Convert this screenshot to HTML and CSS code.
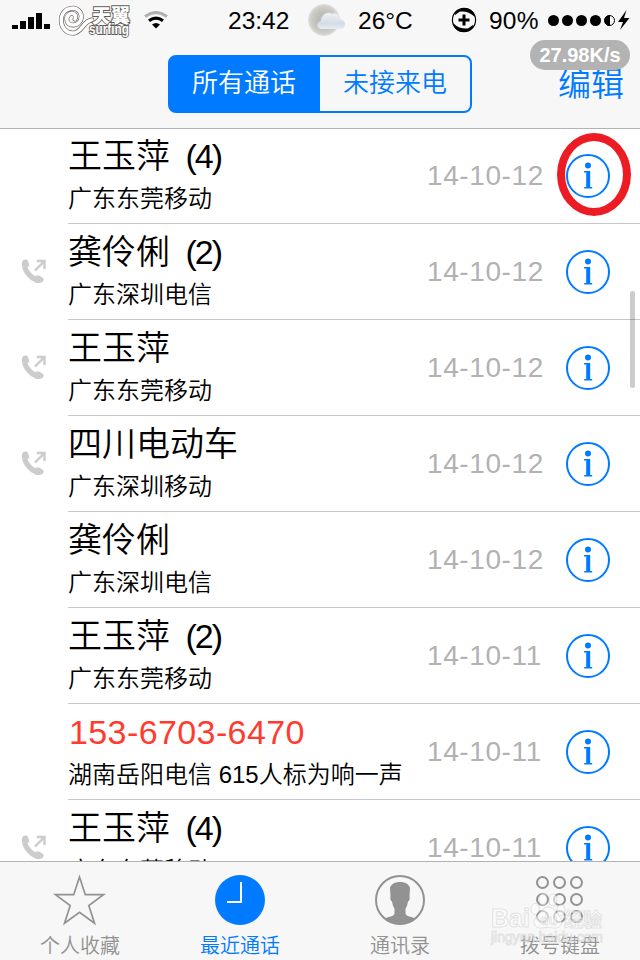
FILE: index.html
```html
<!DOCTYPE html>
<html lang="zh-CN">
<head>
    <meta charset="UTF-8">
    <meta name="viewport" content="width=device-width, initial-scale=1.0">
    <title>最近通话</title>
    <link rel="stylesheet" href="styles.css">
</head>
<body>
    <svg class="sprite">
        <symbol id="info" viewBox="0 0 44 44">
            <circle cx="22" cy="22" r="21" fill="none" stroke="#007aff" stroke-width="2"/>
            <circle cx="22" cy="11.500" r="3" fill="#007aff"/>
            <path d="M18 17h6.200v16h2v1.500h-8V33h2V18.500H18z" fill="#007aff"/>
        </symbol>
        <symbol id="outgoing" viewBox="0 0 26 26">
            <path d="M1.500 3C3 1 6 1 7 3l1 3c.4 1.500-.300 2.500-1.500 3.200C8 13 11 16.300 14.500 18.500c1-1.300 2-1.600 3.500-1l4 2.500c1.300 1 .800 2.500-.500 3.700-3 2.500-7 1.500-11.500-1.700C4 17.500-1 9 1.500 3z" fill="#ccc"/>
            <path d="M14 12.500L23.500 3M16 3h7.500v8" fill="none" stroke="#ccc" stroke-width="2.400"/>
        </symbol>
    </svg>

    <div class="phone">
        <header class="header">
            <div class="status-bar">
                <svg class="signal" width="38" height="16" viewBox="0 0 38 16"><path d="M0 12h6v4H0zM8 8h6v8H8zM16 4h6v12h-6zM24 0h6v16h-6zM32 11h6v5h-6z"/></svg>
                <svg class="carrier" width="76" height="36" viewBox="0 0 76 36">
                    <g fill="none" stroke-linecap="round">
                        <path d="M17 17C19 13 15 10 11.500 12 6.500 16 9 23.500 15.500 23 23 22 25 15 22 10 17 3 6 6 3.500 15 2 26 9 32 16.500 31 25 29 25 19 34 18" stroke="#625a59" stroke-width="4.800"/>
                        <path d="M17 17C19 13 15 10 11.500 12 6.500 16 9 23.500 15.500 23 23 22 25 15 22 10 17 3 6 6 3.500 15 2 26 9 32 16.500 31 25 29 25 19 34 18" stroke="#fff" stroke-width="3.600"/>
                    </g>
                    <text class="carrier-name" x="34" y="21" textLength="38">天翼</text>
                    <text class="carrier-sub" x="31" y="32" textLength="40" lengthAdjust="spacingAndGlyphs">surfing</text>
                </svg>
                <svg class="wifi" width="24" height="18" viewBox="0 0 24 18">
                    <path d="M1 5.500Q12-2.500 23 5.500" fill="none" stroke="#b0b0b0" stroke-width="3"/>
                    <path d="M5 9.700Q12 4.500 19 9.700" fill="none" stroke="#000" stroke-width="3.200"/>
                    <path d="M8 13.500Q12 10.500 16 13.500L12 17.500z"/>
                </svg>
                <span class="time">23:42</span>
                <svg class="weather" width="40" height="34" viewBox="0 0 40 34">
                    <defs>
                        <radialGradient id="moon"><stop offset=".4" stop-color="#bdbcb6"/><stop offset=".85" stop-color="#cfcec9"/><stop offset="1" stop-color="#e4e4e1"/></radialGradient>
                        <linearGradient id="cloud" x2="0" y2="1"><stop stop-color="#edf1f5"/><stop offset=".65" stop-color="#d3dce6"/><stop offset="1" stop-color="#e8ecf0"/></linearGradient>
                    </defs>
                    <circle cx="17" cy="17" r="16" fill="url(#moon)"/>
                    <path d="M14 26c-5-1-5-7 0-8 0-7 7-10 11-7 4-2 8 1 8 5 6 1 7 9 1 10z" fill="url(#cloud)"/>
                </svg>
                <span class="temp">26°C</span>
                <svg class="lock" width="26" height="26" viewBox="0 0 26 26">
                    <circle cx="13" cy="13" r="11.600" fill="none" stroke="#000" stroke-width="1.200"/>
                    <path d="M4 6C9-.500 18-.500 22 5l2 5C19 5 14 4 9 4.500L4 8zM22 20C17 26.500 8 26.500 4 21l-2-5c5 5 10 6 15 5.500l5-3.500z"/>
                    <path d="M13 7.500v11M7.500 13h11" stroke="#000" stroke-width="3"/>
                </svg>
                <span class="percent">90%</span>
                <svg class="battery" width="82" height="22" viewBox="0 0 82 22">
                    <circle cx="5.500" cy="10.500" r="5.500"/><circle cx="19.500" cy="10.500" r="5.500"/><circle cx="33.500" cy="10.500" r="5.500"/><circle cx="47.500" cy="10.500" r="5.500"/>
                    <circle cx="61.500" cy="10.500" r="5" fill="none" stroke="#000"/>
                    <path d="M62 5a5.500 5.500 0 0 0 0 11zM78.500 0L70 12h5l-3 8 9.500-12h-5.500z"/>
                </svg>
            </div>
            <div class="nav-bar">
                <div class="segmented">
                    <div class="segment active">所有通话</div>
                    <div class="segment">未接来电</div>
                </div>
                <a class="edit">编辑</a>
            </div>
            <div class="speed">27.98K/s</div>
        </header>

        <main class="calls">
            <div class="call">
                <div class="direction"></div>
                <div class="details">
                    <div class="who"><div class="name">王玉萍 <span class="count">(4)</span></div><div class="place">广东东莞移动</div></div>
                    <div class="date">14-10-12</div>
                    <svg class="info"><use href="#info"/></svg>
                </div>
            </div>
            <div class="call">
                <div class="direction"><svg><use href="#outgoing"/></svg></div>
                <div class="details">
                    <div class="who"><div class="name">龚伶俐 <span class="count">(2)</span></div><div class="place">广东深圳电信</div></div>
                    <div class="date">14-10-12</div>
                    <svg class="info"><use href="#info"/></svg>
                </div>
            </div>
            <div class="call">
                <div class="direction"><svg><use href="#outgoing"/></svg></div>
                <div class="details">
                    <div class="who"><div class="name">王玉萍</div><div class="place">广东东莞移动</div></div>
                    <div class="date">14-10-12</div>
                    <svg class="info"><use href="#info"/></svg>
                </div>
            </div>
            <div class="call">
                <div class="direction"><svg><use href="#outgoing"/></svg></div>
                <div class="details">
                    <div class="who"><div class="name">四川电动车</div><div class="place">广东深圳移动</div></div>
                    <div class="date">14-10-12</div>
                    <svg class="info"><use href="#info"/></svg>
                </div>
            </div>
            <div class="call">
                <div class="direction"></div>
                <div class="details">
                    <div class="who"><div class="name">龚伶俐</div><div class="place">广东深圳电信</div></div>
                    <div class="date">14-10-12</div>
                    <svg class="info"><use href="#info"/></svg>
                </div>
            </div>
            <div class="call">
                <div class="direction"></div>
                <div class="details">
                    <div class="who"><div class="name">王玉萍 <span class="count">(2)</span></div><div class="place">广东东莞移动</div></div>
                    <div class="date">14-10-11</div>
                    <svg class="info"><use href="#info"/></svg>
                </div>
            </div>
            <div class="call">
                <div class="direction"></div>
                <div class="details">
                    <div class="who"><div class="name missed">153-6703-6470</div><div class="place">湖南岳阳电信 615人标为响一声</div></div>
                    <div class="date">14-10-11</div>
                    <svg class="info"><use href="#info"/></svg>
                </div>
            </div>
            <div class="call">
                <div class="direction"><svg><use href="#outgoing"/></svg></div>
                <div class="details">
                    <div class="who"><div class="name">王玉萍 <span class="count">(4)</span></div><div class="place">广东东莞移动</div></div>
                    <div class="date">14-10-11</div>
                    <svg class="info"><use href="#info"/></svg>
                </div>
            </div>
            <div class="highlight"></div>
            <div class="scrollbar"></div>
        </main>

        <nav class="tab-bar">
            <div class="tab">
                <svg width="56" height="54" viewBox="0 0 56 54"><path d="M27.500 4l5.800 17.700H51.500L36.800 32.500l5.700 17.700-15-10.900-15 10.900 5.700-17.700L3.500 21.700h18.200z" fill="none" stroke="#929292" stroke-width="1.700"/></svg>
                <span>个人收藏</span>
            </div>
            <div class="tab active">
                <svg width="56" height="54" viewBox="0 0 56 54"><circle cx="28" cy="27" r="25" fill="#007aff"/><path d="M29 9v20H15" fill="none" stroke="#fff" stroke-width="2"/></svg>
                <span>最近通话</span>
            </div>
            <div class="tab">
                <svg width="56" height="54" viewBox="0 0 56 54">
                    <circle cx="28" cy="27" r="24" fill="none" stroke="#929292" stroke-width="2"/>
                    <path d="M13 45.500c4-2.500 8.500-1.500 9.500-5v-5c-1.500-2-2-4-2.500-7-1.500-.5-2-3-1.500-5L18 15c1-4 5-6 10-6s9 2 10 6l-.5 8.500c.5 2 0 4.500-1.500 5-.5 3-1 5-2.500 7v5c1 3.500 5.500 2.500 9.500 5-8 8-22 8-30 0z" fill="#929292"/>
                </svg>
                <span>通讯录</span>
            </div>
            <div class="tab">
                <svg width="56" height="54" viewBox="0 0 56 54">
                    <g fill="none" stroke="#929292" stroke-width="2">
                        <circle cx="10.500" cy="9.500" r="5.500"/><circle cx="27.500" cy="9.500" r="5.500"/><circle cx="44.500" cy="9.500" r="5.500"/>
                        <circle cx="10.500" cy="26.500" r="5.500"/><circle cx="27.500" cy="26.500" r="5.500"/><circle cx="44.500" cy="26.500" r="5.500"/>
                        <circle cx="10.500" cy="43.500" r="5.500"/><circle cx="27.500" cy="43.500" r="5.500"/><circle cx="44.500" cy="43.500" r="5.500"/>
                    </g>
                </svg>
                <span>拨号键盘</span>
            </div>
            <svg class="watermark" width="124" height="60" viewBox="0 0 124 60">
                <g class="paw"><ellipse cx="46" cy="20" rx="4" ry="5.500"/><ellipse cx="54" cy="10.500" rx="4" ry="6"/><ellipse cx="64" cy="11" rx="4" ry="6"/><ellipse cx="72" cy="21" rx="4" ry="5.500"/><path d="M59 18c5 0 7 5 11 9 6 6 1 13-5 12-4-.7-8-.7-12 0-7 1-11-6-5-12 4-4 6-9 11-9z"/></g>
                <text class="mark-name" x="2" y="38" textLength="39" lengthAdjust="spacingAndGlyphs">Bai</text>
                <text class="mark-du" x="51" y="36" textLength="17">du</text>
                <text class="mark-cn" x="75" y="38" textLength="38">经验</text>
                <text class="mark-url" x="2" y="53" textLength="112">jingyan.baidu.com</text>
            </svg>
        </nav>
    </div>
</body>
</html>
```
FILE: styles.css
```css
* {
    box-sizing: border-box;
}
body {
    margin: 0;
    font-family: "Liberation Sans", "Noto Sans CJK SC", sans-serif;
    font-weight: 350;
    color: #000;
    background: #fff;
}
svg {
    display: block;
    flex-shrink: 0;
}
.sprite {
    position: absolute;
    width: 0;
    height: 0;
}
.phone {
    width: 640px;
    height: 960px;
    display: flex;
    flex-direction: column;
    overflow: hidden;
}

/* header */
.header {
    position: relative;
    z-index: 1;
    height: 129px;
    flex-shrink: 0;
    background: #f7f7f7;
    border-bottom: 1px solid #b2b2b2;
}
.status-bar {
    display: flex;
    align-items: center;
    height: 40px;
    padding-left: 12px;
    font-size: 24.5px;
    line-height: 40px;
    white-space: nowrap;
}
.status-bar span {
    padding-top: 2px;
}
.signal {
    margin-top: 2px;
}
.carrier {
    margin-left: 8px;
    overflow: visible;
}
.carrier-name {
    font: 900 19px "Noto Sans CJK SC", sans-serif;
}
.carrier-sub {
    font: bold 14px "Liberation Sans", sans-serif;
}
.carrier-name,
.carrier-sub {
    fill: #fff;
    stroke: #625a59;
    stroke-width: 1.8px;
    paint-order: stroke;
}
.wifi {
    margin-left: 10px;
}
.time {
    width: 79px;
    margin-left: 60px;
}
.weather {
    width: 40px;
}
.temp {
    width: 83px;
    margin-left: 11px;
}
.lock {
    margin-left: 10px;
}
.percent {
    width: 59px;
    margin-left: 12px;
    letter-spacing: 0.2px;
}
.battery {
    margin-top: 1px;
}
.nav-bar {
    display: grid;
    grid-template-columns: 168px 304px 1fr;
    padding-top: 15px;
}
.segmented {
    grid-column: 2;
    display: grid;
    grid-template-columns: 150px 150px;
    height: 58px;
    border: 2px solid #007aff;
    border-radius: 8px;
    overflow: hidden;
    background: #007aff;
}
.segment {
    font-size: 26px;
    line-height: 52px;
    text-align: center;
    color: #007aff;
    background: #f7f7f7;
}
.segment.active {
    background: #007aff;
    color: #fff;
    padding-right: 2px;
}
.edit {
    font-size: 33px;
    line-height: 60px;
    text-align: right;
    padding-right: 16px;
    color: #007aff;
}
.speed {
    position: absolute;
    top: 40px;
    left: 530px;
    width: 100px;
    height: 30px;
    border-radius: 15px;
    background: #b3b3b3;
    color: #fff;
    font-size: 20px;
    font-weight: bold;
    line-height: 30px;
    text-align: center;
}

/* call list */
.calls {
    position: relative;
    flex: 1;
    min-height: 0;
    overflow: hidden;
    margin-top: -1px;
}
.call {
    display: flex;
    height: 96px;
}
.direction {
    width: 68px;
    padding: 34px 0 0 21px;
}
.direction svg {
    width: 26px;
    height: 26px;
}
.details {
    flex: 1;
    display: flex;
    align-items: center;
    padding-right: 30px;
    border-bottom: 1px solid #c8c7cc;
}
.who {
    flex: 1;
    height: 95px;
    white-space: nowrap;
}
.name {
    height: 57px;
    font-size: 34px;
    line-height: 56px;
}
.count {
    letter-spacing: -2px;
    margin-left: 6px;
}
.missed {
    color: #ff3b30;
    letter-spacing: 0.4px;
    padding-left: 1px;
}
.place {
    font-size: 24px;
    line-height: 28px;
}
.date {
    width: 117px;
    font-size: 28px;
    letter-spacing: 0.6px;
    color: #b2b2b2;
    margin-right: 22px;
    padding-top: 1px;
}
.info {
    width: 44px;
    height: 44px;
}
.highlight {
    position: absolute;
    top: 5px;
    left: 557px;
    width: 74px;
    height: 83px;
    border: 8px solid #ed1c24;
    border-radius: 50%;
}
.scrollbar {
    position: absolute;
    top: 163px;
    right: 5px;
    width: 5px;
    height: 97px;
    border-radius: 3px;
    background: rgba(0, 0, 0, 0.2);
}

/* tab bar */
.tab-bar {
    position: relative;
    display: flex;
    height: 99px;
    flex-shrink: 0;
    background: #f7f7f7;
    border-top: 1px solid #b2b2b2;
}
.tab {
    flex: 1;
    display: flex;
    flex-direction: column;
    align-items: center;
    padding-top: 11px;
    font-size: 20px;
    line-height: 39px;
    color: #929292;
}
.tab.active {
    color: #007aff;
}
.watermark {
    position: absolute;
    top: 27px;
    left: 489px;
    fill: rgba(255, 255, 255, 0.55);
    stroke: rgba(190, 190, 190, 0.4);
    stroke-width: 1px;
}
.mark-name {
    font: bold 25px "Liberation Sans", sans-serif;
}
.mark-du {
    font: bold 14px "Liberation Sans", sans-serif;
}
.mark-cn {
    font: bold 19px "Noto Sans CJK SC", sans-serif;
}
.mark-url {
    font: 14px "Liberation Sans", sans-serif;
}
```
